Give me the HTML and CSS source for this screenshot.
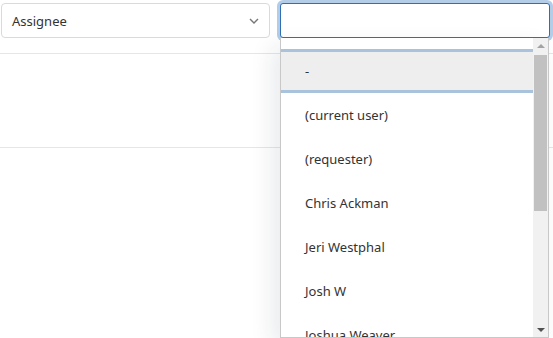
FILE: index.html
```html
<!DOCTYPE html>
<html lang="en">
    <head>
        <meta charset="UTF-8" />
        <meta name="viewport" content="width=device-width, initial-scale=1.0" />
        <title>Assignee filter</title>
        <link rel="stylesheet" href="styles.css">
    </head>
    <body>
        <div class="filters">
            <div class="select">
                <span>Assignee</span>
                <svg class="chevron" width="10" height="6" viewBox="0 0 10 6">
                    <path d="M1 1 L5 5 L9 1" fill="none" stroke="#777" stroke-width="1.4" />
                </svg>
            </div>
            <div class="search-wrap">
                <input class="search" type="text" />
                <div class="dropdown">
                    <ul class="options">
                        <li class="active">-</li>
                        <li>(current user)</li>
                        <li>(requester)</li>
                        <li>Chris Ackman</li>
                        <li>Jeri Westphal</li>
                        <li>Josh W</li>
                        <li>Joshua Weaver</li>
                    </ul>
                    <div class="scrollbar">
                        <div class="arrow up"></div>
                        <div class="track"><div class="thumb"></div></div>
                        <div class="arrow down"></div>
                    </div>
                </div>
            </div>
        </div>
        <div class="row"></div>
    </body>
</html>
```

FILE: styles.css
```css
html, body {
    height: 100%;
}

body {
    margin: 0;
    font-family: "Noto Sans", Arial, sans-serif;
    font-size: 13px;
    color: #333;
    background: white;
    overflow: hidden;
}

.filters {
    display: flex;
    gap: 10px;
    padding: 3px 0 0 1px;
    height: 54px;
    box-sizing: border-box;
    border-bottom: 1px solid #e6e6e6;
}

.select {
    width: 269px;
    height: 35px;
    box-sizing: border-box;
    border: 1px solid #dadada;
    border-radius: 4px;
    display: flex;
    align-items: center;
    justify-content: space-between;
    padding: 0 10px 0 10px;
}

.search-wrap {
    position: relative;
}

.search {
    width: 270px;
    height: 35px;
    box-sizing: border-box;
    border: 1px solid #2f70b4;
    border-radius: 3px;
    box-shadow: 0 0 0 3px #b3cde8;
    outline: none;
    margin: 0;
}

.dropdown {
    position: absolute;
    top: 35px;
    left: 0;
    width: 269px;
    height: 300px;
    box-sizing: border-box;
    border: 1px solid #c8c8c8;
    border-top: none;
    background: white;
    display: flex;
    box-shadow: -8px 8px 22px rgba(0, 30, 60, 0.09);
    overflow: hidden;
    z-index: 2;
}

.options {
    list-style: none;
    margin: 0;
    padding: 11px 0 0 0;
    flex: 1;
}

.options li {
    height: 44px;
    line-height: 44px;
    padding-left: 24px;
    white-space: nowrap;
}

.options li.active {
    background: #eeeeee;
    border-top: 3px solid #a9c3dc;
    border-bottom: 3px solid #a9c3dc;
    line-height: 38px;
    box-sizing: border-box;
}

.scrollbar {
    width: 15px;
    background: #f1f1f1;
    display: flex;
    flex-direction: column;
}

.arrow {
    height: 15px;
    display: flex;
    align-items: center;
    justify-content: center;
}

.arrow::before {
    content: "";
    border-left: 4px solid transparent;
    border-right: 4px solid transparent;
}

.arrow.up::before {
    border-bottom: 4px solid #a3a3a3;
}

.arrow.down::before {
    border-top: 4px solid #505050;
}

.track {
    flex: 1;
    padding: 2px 1px;
}

.thumb {
    height: 156px;
    background: #c1c1c1;
}

.row {
    height: 93px;
    border-bottom: 1px solid #e6e6e6;
}
```
